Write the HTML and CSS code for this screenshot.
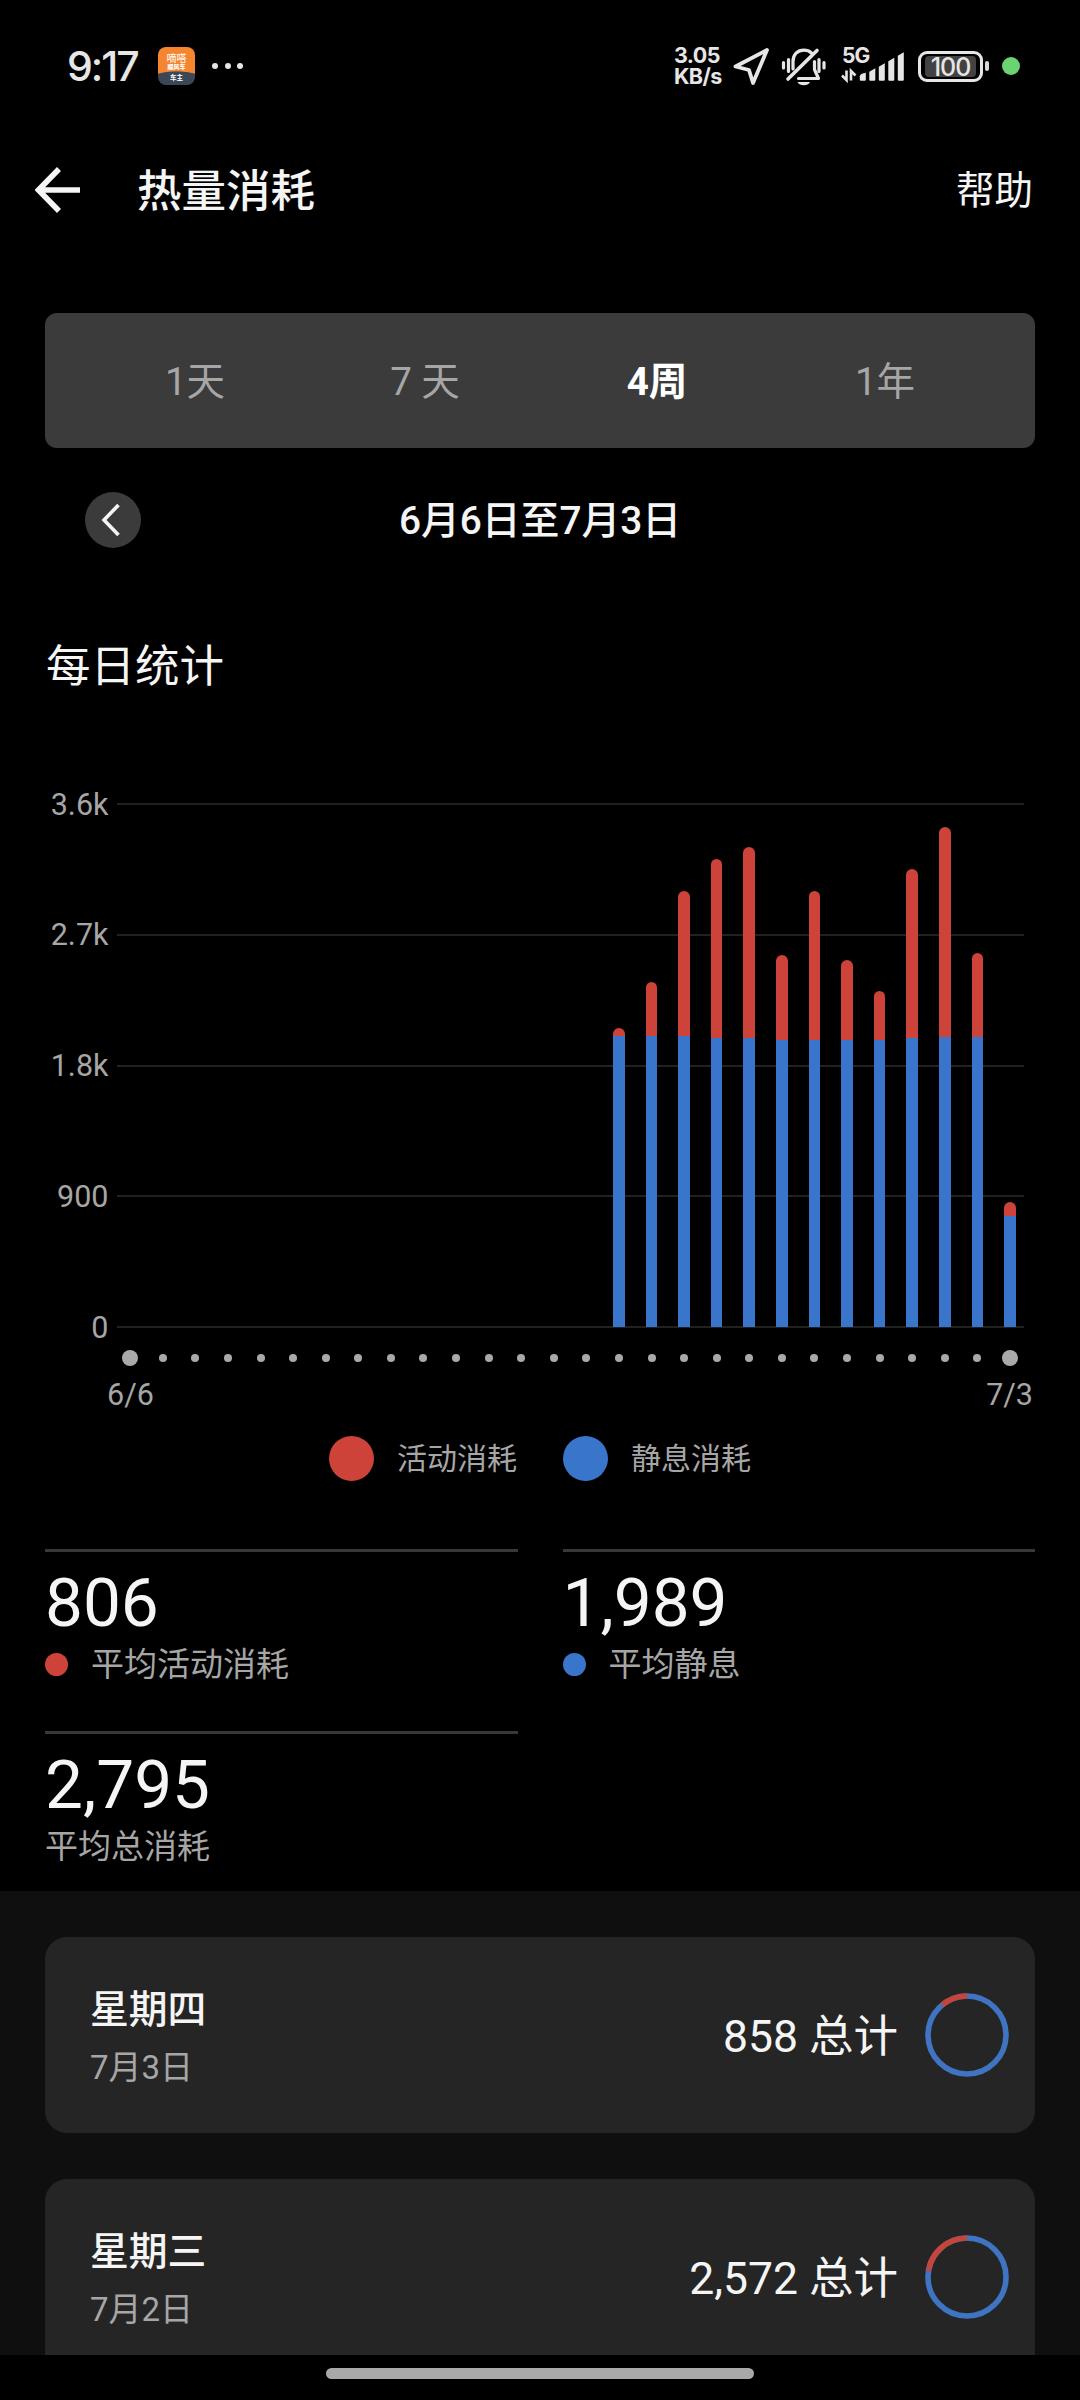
FILE: index.html
```html
<!DOCTYPE html>
<html lang="zh-CN">
<head>
    <meta charset="UTF-8">
    <meta name="viewport" content="width=device-width, initial-scale=1.0">
    <title>热量消耗</title>
    <link rel="stylesheet" href="styles.css">
</head>
<body>
    <!-- Status bar -->
    <div class="status-bar">
        <span class="clock">9:17</span>
        <div class="app-icon">
            <span class="app-name">嘀嗒</span>
            <span class="app-sub">顺风车</span>
            <span class="app-tag">车主</span>
        </div>
        <div class="more-dots"><i></i><i></i><i></i></div>

        <div class="net-speed"><span>3.05</span><span>KB/s</span></div>
        <svg class="icon-location" width="38" height="40" viewBox="0 0 38 40">
            <path d="M35 3 L3.5 19.5 L17 23 L21 36 Z" fill="none" stroke="#e6e6e6" stroke-width="3.8" stroke-linejoin="round"/>
        </svg>
        <svg class="icon-bell" width="46" height="40" viewBox="0 0 46 40">
            <g fill="none" stroke="#e6e6e6" stroke-width="3.2" stroke-linecap="round">
                <path d="M2.5 15.5v5.500M7.5 12.500v12M38 12.500v12M43 15.500v5.500"/>
                <path d="M12 22V14.500C12 7.500 16.500 3.200 23 3.200C26 3.200 28.500 4.200 30.500 6"/>
                <path d="M33.500 14.500v8l4 9H17.500" stroke-linejoin="round"/>
                <path d="M36 3.500L7 32" stroke-width="3.600"/>
            </g>
            <path d="M16.500 35h12.500c-2 4.400-10.500 4.400-12.500 0z" fill="#e6e6e6"/>
        </svg>
        <div class="signal">
            <span class="signal-type">5G</span>
            <svg width="66" height="36" viewBox="0 0 66 36">
                <g fill="#e6e6e6" transform="translate(-2.2 -1.2)">
                    <path d="M21 33v-3.500q0-1.500 2-2.500l4-1v7q0 1-1 1h-4q-1 0-1-1z"/>
                    <path d="M30.500 33V25l6-3.500V33q0 1-1 1h-4q-1 0-1-1z"/>
                    <path d="M40 33V20l6-3.500V33q0 1-1 1h-4q-1 0-1-1z"/>
                    <path d="M49.500 33V14.500l6-3.500V33q0 1-1 1h-4q-1 0-1-1z"/>
                    <path d="M59 33V9l6-3.500V33q0 1-1 1h-4q-1 0-1-1z"/>
                </g>
                <path d="M5.500 22.500v9.500L1 27.500M10 32.500v-9.500l4.500 4.500" fill="none" stroke="#e6e6e6" stroke-width="2.600"/>
            </svg>
        </div>
        <div class="battery"><span>100</span></div>
        <i class="battery-tip"></i>
        <i class="privacy-dot"></i>
    </div>

    <!-- Header -->
    <div class="header">
        <svg class="back" width="46" height="46" viewBox="0 0 46 46">
            <path d="M24 2 L3.500 23 L24 44 M3.500 23 H45" fill="none" stroke="#f5f5f5" stroke-width="5.600"/>
        </svg>
        <h1>热量消耗</h1>
        <a class="help">帮助</a>
    </div>

    <!-- Range tabs -->
    <div class="tabs">
        <span class="tab">1天</span>
        <span class="tab">7 天</span>
        <span class="tab active">4周</span>
        <span class="tab">1年</span>
    </div>

    <div class="date-nav">
        <button class="prev-btn">
            <svg width="20" height="34" viewBox="0 0 20 34">
                <path d="M17.500 2 L3 17 L17.500 32" fill="none" stroke="#f5f5f5" stroke-width="3.600"/>
            </svg>
        </button>
        <span class="date-range">6月6日至7月3日</span>
    </div>

    <h2>每日统计</h2>

    <!-- Chart -->
    <div class="chart">
        <div class="plot">
            <div class="grid-lines">
                <div class="grid-row"><span>3.6k</span><i></i></div>
                <div class="grid-row"><span>2.7k</span><i></i></div>
                <div class="grid-row"><span>1.8k</span><i></i></div>
                <div class="grid-row"><span>900</span><i></i></div>
                <div class="grid-row"><span>0</span><i></i></div>
            </div>
            <div class="bars" id="bars"></div>
        </div>
        <div class="dots" id="dots"></div>
        <div class="x-labels"><span>6/6</span><span>7/3</span></div>
    </div>

    <div class="legend">
        <i class="red"></i><span>活动消耗</span>
        <i class="blue"></i><span>静息消耗</span>
    </div>

    <!-- Averages -->
    <div class="stats">
        <div class="stat">
            <div class="stat-value">806</div>
            <div class="stat-label"><i class="red"></i>平均活动消耗</div>
        </div>
        <div class="stat">
            <div class="stat-value">1,989</div>
            <div class="stat-label"><i class="blue"></i>平均静息</div>
        </div>
        <div class="stat">
            <div class="stat-value">2,795</div>
            <div class="stat-label">平均总消耗</div>
        </div>
    </div>

    <!-- Daily list -->
    <div class="day-list">
        <div class="day-card">
            <div class="day-info">
                <div class="day-name">星期四</div>
                <div class="day-date">7月3日</div>
            </div>
            <div class="day-total">858 总计</div>
            <svg class="ring" width="84" height="84" viewBox="0 0 84 84">
                <circle cx="42" cy="42" r="39" class="ring-rest"/>
                <circle cx="42" cy="42" r="39" class="ring-active" pathLength="100" stroke-dasharray="11 89"/>
            </svg>
        </div>
        <div class="day-card">
            <div class="day-info">
                <div class="day-name">星期三</div>
                <div class="day-date">7月2日</div>
            </div>
            <div class="day-total">2,572 总计</div>
            <svg class="ring" width="84" height="84" viewBox="0 0 84 84">
                <circle cx="42" cy="42" r="39" class="ring-rest"/>
                <circle cx="42" cy="42" r="39" class="ring-active" pathLength="100" stroke-dasharray="22.5 77.5"/>
            </svg>
        </div>
    </div>

    <div class="nav-bar"><i></i></div>

    <script>
        var MAX = 3600;
        var DAYS = 28;

        // [resting, total] for the last days of the range
        var data = [
            [2000, 2057], [2000, 2375], [2004, 3001], [1986, 3224], [1988, 3304],
            [1979, 2564], [1979, 3004], [1979, 2525], [1979, 2311], [1990, 3150],
            [1993, 3444], [1993, 2572], [763, 858]
        ];

        var bars = document.getElementById('bars');
        var dots = document.getElementById('dots');

        for (var i = 0; i < DAYS; i++) {
            var day = data[i - (DAYS - data.length)];
            var col = document.createElement('div');
            col.className = 'col';
            if (day) {
                var bar = document.createElement('div');
                bar.className = 'bar';
                bar.style.height = (day[1] / MAX * 100) + '%';
                var rest = document.createElement('div');
                rest.className = 'bar-rest';
                rest.style.height = (day[0] / day[1] * 100) + '%';
                bar.appendChild(rest);
                col.appendChild(bar);
            }
            bars.appendChild(col);

            var dotCol = document.createElement('div');
            dotCol.className = 'col';
            var dot = document.createElement('i');
            if (i === 0 || i === DAYS - 1) {
                dot.className = 'big';
            }
            dotCol.appendChild(dot);
            dots.appendChild(dotCol);
        }
    </script>
</body>
</html>
```
FILE: styles.css
```css
* {
    box-sizing: border-box;
}
body {
    margin: 0;
    width: 1080px;
    height: 2400px;
    overflow: hidden;
    display: flex;
    flex-direction: column;
    background-color: #000;
    color: #f5f5f5;
    font-family: Roboto, "Noto Sans CJK SC", sans-serif;
}
body > * {
    flex-shrink: 0;
}
i {
    display: block;
    flex-shrink: 0;
}
.red {
    background-color: #cd4239;
}
.blue {
    background-color: #3a75cc;
}

/* Status bar */
.status-bar {
    height: 132px;
    padding-left: 67px;
    display: flex;
    align-items: center;
    color: #e6e6e6;
}
.clock {
    width: 91px;
    font-family: Inter, sans-serif;
    font-size: 41px;
    font-weight: 500;
    letter-spacing: -2px;
    line-height: 44px;
}
.app-icon {
    width: 37px;
    height: 38px;
    border-radius: 8px;
    overflow: hidden;
    background: radial-gradient(ellipse 34px 14px at 50% 100%, #3b4657 94%, #f5852f 100%);
    color: #fff;
    font-family: "Noto Sans CJK SC", sans-serif;
    text-align: center;
    display: flex;
    flex-direction: column;
    align-items: center;
}
.app-name {
    font-size: 10px;
    line-height: 11px;
    margin-top: 5px;
}
.app-sub {
    font-size: 6px;
    line-height: 8px;
    font-weight: 900;
}
.app-tag {
    font-size: 6.5px;
    line-height: 9px;
    font-weight: 700;
    margin-top: 2px;
}
.more-dots {
    display: flex;
    gap: 6.5px;
    margin-left: 17px;
}
.more-dots i {
    width: 6px;
    height: 6px;
    border-radius: 50%;
    background-color: #e6e6e6;
}
.net-speed {
    margin-left: auto;
    width: 58px;
    display: flex;
    flex-direction: column;
    font-family: Inter, sans-serif;
    font-size: 21.5px;
    font-weight: 700;
    line-height: 21.5px;
    letter-spacing: -0.6px;
}
.icon-location {
    margin-top: 2px;
}
.icon-bell {
    margin: 1px 0 0 11px;
}
.signal {
    position: relative;
    width: 66px;
    height: 36px;
    margin-left: 14px;
}
.signal-type {
    position: absolute;
    left: 1px;
    top: -2px;
    font-family: Inter, sans-serif;
    font-size: 21px;
    font-weight: 700;
    line-height: 20px;
    letter-spacing: -1px;
}
.battery {
    width: 65px;
    height: 31px;
    margin-left: 11px;
    padding: 2px 4px;
    border: 3px solid #e6e6e6;
    border-radius: 9px;
    display: flex;
}
.battery span {
    flex: 1;
    border-radius: 4px;
    background-color: #424242;
    font-family: Inter, sans-serif;
    font-size: 25px;
    font-weight: 500;
    line-height: 22px;
    letter-spacing: -1px;
    text-align: center;
}
.battery-tip {
    width: 4px;
    height: 10px;
    margin-left: 2px;
    border-radius: 2px;
    background-color: #d8d8d8;
}
.privacy-dot {
    width: 18px;
    height: 18px;
    margin: 0 60px 0 13px;
    border-radius: 50%;
    background-color: #6bd36f;
}

/* Header */
.header {
    height: 116px;
    padding: 0 47px 0 35px;
    display: flex;
    align-items: center;
}
h1, h2 {
    margin: 0;
    font-size: 44.5px;
    font-weight: 400;
    line-height: 60px;
}
h1 {
    margin-left: 56px;
    padding-top: 4px;
    font-weight: 500;
}
.help {
    margin-left: auto;
    padding-top: 2px;
    font-size: 38.5px;
    line-height: 50px;
}

/* Range tabs */
.tabs {
    height: 135px;
    margin: 65px 45px 0;
    padding: 2px 35px 0;
    display: flex;
    align-items: center;
    border-radius: 12px;
    background-color: #3b3b3b;
}
.tab {
    width: 25%;
    text-align: center;
    font-size: 38.5px;
    line-height: 50px;
    color: #a6a6a6;
}
.tab.active {
    padding-left: 4px;
    color: #fff;
    font-weight: 700;
}
.date-nav {
    height: 144px;
    padding: 0 85px;
    display: grid;
    grid-template-columns: 56px 1fr 56px;
    align-items: center;
}
.prev-btn {
    width: 56px;
    height: 56px;
    padding: 0 4px 0 0;
    border: none;
    border-radius: 50%;
    background-color: #3b3b3b;
    display: flex;
    align-items: center;
    justify-content: center;
}
.date-range {
    padding-top: 2px;
    text-align: center;
    font-size: 38.8px;
    font-weight: 500;
    line-height: 50px;
}
h2 {
    height: 144px;
    padding: 3px 0 0 46px;
    line-height: 144px;
}

/* Chart */
.chart {
    margin-top: 52px;
    color: #a6a6a6;
    font-size: 30.5px;
}
.plot {
    display: grid;
    height: 555px;
}
.grid-lines, .bars {
    grid-area: 1 / 1;
}
.grid-lines {
    display: flex;
    flex-direction: column;
    justify-content: space-between;
}
.grid-row {
    height: 32px;
    padding-right: 56px;
    display: flex;
    align-items: center;
    gap: 8px;
}
.grid-row span {
    width: 108.5px;
    padding-top: 1px;
    text-align: right;
    line-height: 32px;
}
.grid-row i {
    flex: 1;
    height: 2px;
    background-color: #212121;
}
.bars, .dots {
    width: 912px;
    margin-left: 114px;
    display: flex;
}
.bars {
    padding: 16px 0;
}
.col {
    flex: 1;
    display: flex;
    justify-content: center;
    align-items: flex-end;
}
.bar {
    width: 11.6px;
    border-radius: 6px 6px 0 0;
    overflow: hidden;
    background-color: #cd4239;
    display: flex;
    align-items: flex-end;
}
.bar-rest {
    width: 100%;
    background-color: #3a75cc;
}
.dots {
    height: 29px;
}
.dots .col {
    align-items: center;
}
.dots i {
    width: 8px;
    height: 8px;
    border-radius: 50%;
    background-color: #a9a9a9;
}
.dots .big {
    width: 16px;
    height: 16px;
}
.x-labels {
    display: flex;
    justify-content: space-between;
    padding: 0 47px 0 107px;
    line-height: 46px;
}

/* Legend */
.legend {
    height: 45px;
    margin-top: 18px;
    display: flex;
    align-items: center;
    justify-content: center;
    color: #a6a6a6;
    font-size: 30px;
    line-height: 45px;
}
.legend i {
    width: 45px;
    height: 45px;
    border-radius: 50%;
}
.legend span {
    margin-left: 23px;
}
.legend span + i {
    margin-left: 46px;
}

/* Averages */
.stats {
    margin: 68px 45px 0;
    display: grid;
    grid-template-columns: 1fr 1fr;
    grid-auto-rows: 182px;
    column-gap: 45px;
    height: 342px;
}
.stat {
    border-top: 3px solid #383838;
}
.stat-value {
    margin-top: 12px;
    font-size: 67.5px;
    line-height: 78px;
}
.stat-label {
    display: flex;
    align-items: center;
    height: 46px;
    color: #a6a6a6;
    font-size: 33px;
    line-height: 46px;
}
.stat-label i {
    width: 23px;
    height: 23px;
    margin-right: 23px;
    margin-bottom: 2px;
    border-radius: 50%;
}

/* Daily list */
.day-list {
    height: 464px;
    overflow: hidden;
    padding: 46px 45px 0;
    background-color: #0f0f0f;
}
.day-card {
    height: 196px;
    margin-bottom: 46px;
    padding: 0 26px 0 45px;
    display: flex;
    align-items: center;
    border-radius: 22px;
    background-color: #252525;
}
.day-info {
    flex: 1;
    padding-top: 5px;
}
.day-name {
    font-size: 38.8px;
    font-weight: 500;
    line-height: 60px;
}
.day-date {
    color: #a6a6a6;
    font-size: 33px;
    line-height: 56px;
}
.day-total {
    margin-right: 27px;
    padding-top: 4px;
    font-size: 44.5px;
    line-height: 60px;
}
.ring {
    transform: rotate(-90deg) scaleY(-1);
}
.ring circle {
    fill: none;
    stroke-width: 5.6;
}
.ring .ring-rest {
    stroke: #3f74c2;
}
.ring .ring-active {
    stroke: #c5443b;
}

/* System navigation */
.nav-bar {
    height: 45px;
    padding-top: 13px;
}
.nav-bar i {
    width: 428px;
    height: 11px;
    margin: 0 auto;
    border-radius: 6px;
    background-color: #a9a9a9;
}
```
